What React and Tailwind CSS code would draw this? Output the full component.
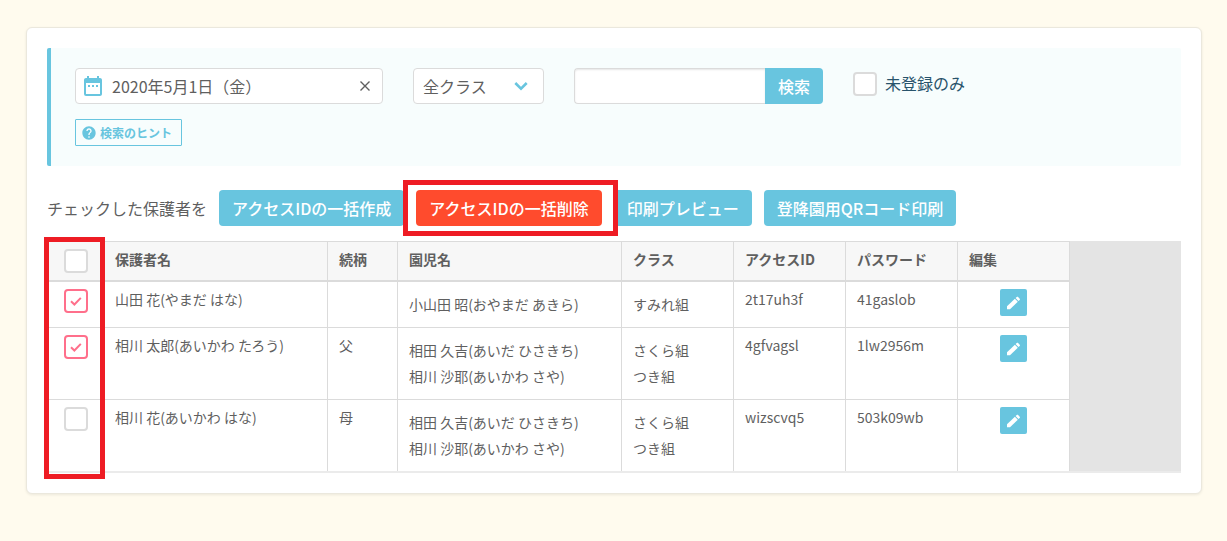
import React, { useState } from "react";
import { MdDateRange, MdHelp } from "react-icons/md";

const GUARDIANS = [
  {
    id: 1,
    name: "山田 花(やまだ はな)",
    relation: "",
    children: [{ name: "小山田 昭(おやまだ あきら)", group: "すみれ組" }],
    accessId: "2t17uh3f",
    password: "41gaslob",
  },
  {
    id: 2,
    name: "相川 太郎(あいかわ たろう)",
    relation: "父",
    children: [
      { name: "相田 久吉(あいだ ひさきち)", group: "さくら組" },
      { name: "相川 沙耶(あいかわ さや)", group: "つき組" },
    ],
    accessId: "4gfvagsl",
    password: "1lw2956m",
  },
  {
    id: 3,
    name: "相川 花(あいかわ はな)",
    relation: "母",
    children: [
      { name: "相田 久吉(あいだ ひさきち)", group: "さくら組" },
      { name: "相川 沙耶(あいかわ さや)", group: "つき組" },
    ],
    accessId: "wizscvq5",
    password: "503k09wb",
  },
];

const HEADINGS = ["保護者名", "続柄", "園児名", "クラス", "アクセスID", "パスワード", "編集"];

function Checkbox({ className = "", ...props }) {
  return (
    <span className={`relative inline-flex size-6 shrink-0 ${className}`}>
      <input
        type="checkbox"
        className="peer size-6 appearance-none rounded-sm border-2 border-[#dbdbdb] bg-white checked:border-[#ff6f8b]"
        {...props}
      />
      <svg
        viewBox="0 0 24 24"
        className="pointer-events-none absolute inset-0 hidden size-6 peer-checked:block"
        fill="none"
        stroke="#ff6f8b"
        strokeWidth="2"
        aria-hidden="true"
      >
        <path d="M7 12.2l3.4 3.3 6.4-6.6" />
      </svg>
    </span>
  );
}

function PencilIcon() {
  return (
    <svg viewBox="0 0 27 27" className="size-[27px]" fill="currentColor" aria-hidden="true">
      <path d="M7 20.3v-3L14.9 9.8l2.9 2.9L10 20.3z" />
      <path d="M15.6 9.1l1.2-1c.4-.4.9-.4 1.3 0l1.6 1.6c.4.4.4.9 0 1.3l-1.2 1z" />
    </svg>
  );
}

function ActionButton({ tone = "bg-[#68c5df]", children }) {
  return (
    <button type="button" className={`h-9 whitespace-nowrap rounded px-[13px] text-base font-medium leading-6 text-white ${tone}`}>
      {children}
    </button>
  );
}

function SearchPanel() {
  const [date, setDate] = useState("2020年5月1日（金）");
  return (
    <form
      onSubmit={(e) => e.preventDefault()}
      className="rounded-xs border-l-4 border-[#68c5df] bg-[#f7fdfd] px-6 py-5"
    >
      <div className="flex flex-wrap items-start gap-x-[30px] gap-y-3">
        <div className="flex h-9 w-[308px] items-center rounded border border-[#dbdbdb] bg-white pl-[5px] pr-[11px]">
          <MdDateRange className="size-6 shrink-0 text-[#68c5df]" aria-hidden="true" />
          <input
            type="text"
            aria-label="日付"
            value={date}
            onChange={(e) => setDate(e.target.value)}
            className="h-full min-w-0 flex-1 bg-transparent pl-[7px] text-base outline-none"
          />
          <button type="button" aria-label="日付をクリア" onClick={() => setDate("")} className="flex size-3 items-center justify-center">
            <svg viewBox="0 0 12 12" className="size-3" stroke="currentColor" strokeWidth="1.4" aria-hidden="true">
              <path d="M1.5 1.5l9 9M10.5 1.5l-9 9" />
            </svg>
          </button>
        </div>

        <div className="relative w-[131px]">
          <select
            aria-label="クラス"
            className="h-9 w-full appearance-none rounded border border-[#dbdbdb] bg-white pl-[9px] pr-10 text-base outline-none"
          >
            <option>全クラス</option>
            <option>すみれ組</option>
            <option>さくら組</option>
            <option>つき組</option>
          </select>
          <svg
            viewBox="0 0 14 10"
            className="pointer-events-none absolute right-4 top-[13px] h-[10px] w-[14px]"
            fill="none"
            stroke="#68c5df"
            strokeWidth="2.6"
            aria-hidden="true"
          >
            <path d="M1.3 2L7 7.6 12.7 2" />
          </svg>
        </div>

        <div className="flex">
          <input
            type="text"
            aria-label="検索キーワード"
            className="h-9 w-[191px] rounded-l border border-r-0 border-[#dbdbdb] bg-white px-2 text-base shadow-[inset_0_1px_2px_rgba(10,10,10,0.1)] outline-none"
          />
          <button type="submit" className="h-9 w-[58px] rounded-r bg-[#68c5df] text-base font-medium text-white">
            検索
          </button>
        </div>

        <label className="flex items-start gap-2 text-base leading-[30px] text-[#28536b]">
          <Checkbox className="mt-1" />
          未登録のみ
        </label>
      </div>

      <button
        type="button"
        className="mt-[15px] flex h-[27px] items-center gap-[3px] rounded-[1px] border border-[#68c5df] pl-[5px] pr-[9px] text-xs font-bold text-[#68c5df]"
      >
        <MdHelp className="size-4" aria-hidden="true" />
        検索のヒント
      </button>
    </form>
  );
}

function GuardianTable() {
  const [checked, setChecked] = useState([1, 2]);
  const allChecked = checked.length === GUARDIANS.length;
  const toggle = (id) =>
    setChecked((ids) => (ids.includes(id) ? ids.filter((i) => i !== id) : [...ids, id]));

  return (
    <div className="relative mt-[15px]">
      <div className="overflow-x-auto border-b-2 border-[#ebebeb] bg-[#e4e4e4]">
        <table className="w-[1023px] table-fixed border-separate border-spacing-0 bg-white text-left text-sm leading-[21px]">
          <colgroup>
            <col className="w-[57px]" />
            <col className="w-[224px]" />
            <col className="w-[70px]" />
            <col className="w-[224px]" />
            <col className="w-[112px]" />
            <col className="w-[112px]" />
            <col className="w-[112px]" />
            <col className="w-[112px]" />
          </colgroup>
          <thead>
            <tr className="bg-[#f7f7f7] [&>th]:border-b-2 [&>th]:border-r [&>th]:border-t [&>th]:border-[#dbdbdb]">
              <th scope="col" className="h-[41px] p-0 pl-[17px] pt-[7px] align-top">
                <Checkbox
                  aria-label="すべて選択"
                  checked={allChecked}
                  onChange={() => setChecked(allChecked ? [] : GUARDIANS.map((g) => g.id))}
                />
              </th>
              {HEADINGS.map((h) => (
                <th key={h} scope="col" className="px-[11px] pb-0 pt-[7px] align-top font-bold">
                  {h}
                </th>
              ))}
            </tr>
          </thead>
          <tbody className="[&>tr:last-child>td]:border-b-0 [&>tr>td]:border-b [&>tr>td]:border-r [&>tr>td]:border-[#dbdbdb] [&>tr>td]:align-top">
            {GUARDIANS.map((g) => (
              <tr key={g.id}>
                <td className="pl-[17px] pt-[7px]">
                  <Checkbox aria-label={g.name} checked={checked.includes(g.id)} onChange={() => toggle(g.id)} />
                </td>
                <td className="px-[11px] pt-[7px]">{g.name}</td>
                <td className="px-[11px] pt-[7px]">{g.relation}</td>
                <td className="px-[11px] pb-[10px] pt-[9px] leading-[26px]">
                  {g.children.map((c) => (
                    <div key={c.name}>{c.name}</div>
                  ))}
                </td>
                <td className="px-[11px] pb-[10px] pt-[9px] leading-[26px]">
                  {g.children.map((c) => (
                    <div key={c.name}>{c.group}</div>
                  ))}
                </td>
                <td className="px-[11px] pt-[7px]">{g.accessId}</td>
                <td className="px-[11px] pt-[7px]">{g.password}</td>
                <td className="pt-[7px]">
                  <button
                    type="button"
                    aria-label={`${g.name}を編集`}
                    className="mx-auto flex size-[27px] items-center justify-center rounded-xs bg-[#68c5df] text-white"
                  >
                    <PencilIcon />
                  </button>
                </td>
              </tr>
            ))}
          </tbody>
        </table>
      </div>
      <div className="pointer-events-none absolute -bottom-[6px] -left-[3px] -top-1 w-[61px] border-5 border-[#ee1c24]" />
    </div>
  );
}

export default function App() {
  return (
    <div className="min-h-screen bg-[#fffbee] py-[27px] pl-[26px] pr-[25px] font-['Noto_Sans_CJK_JP',sans-serif] text-[#5f5f5f]">
      <main className="rounded-md border border-[#ebe8dd] bg-white p-5 shadow-[0_1px_3px_rgba(10,10,10,0.08)]">
        <SearchPanel />

        <div className="mt-6 flex flex-wrap items-center gap-3">
          <span className="text-base leading-6">チェックした保護者を</span>
          <ActionButton>アクセスIDの一括作成</ActionButton>
          <div className="relative">
            <ActionButton tone="bg-[#ff4b2d]">アクセスIDの一括削除</ActionButton>
            <div className="pointer-events-none absolute -bottom-[10px] -left-[13px] -right-4 -top-[10px] z-10 border-5 border-[#ee1c24]" />
          </div>
          <ActionButton>印刷プレビュー</ActionButton>
          <ActionButton>登降園用QRコード印刷</ActionButton>
        </div>

        <GuardianTable />
      </main>
    </div>
  );
}
